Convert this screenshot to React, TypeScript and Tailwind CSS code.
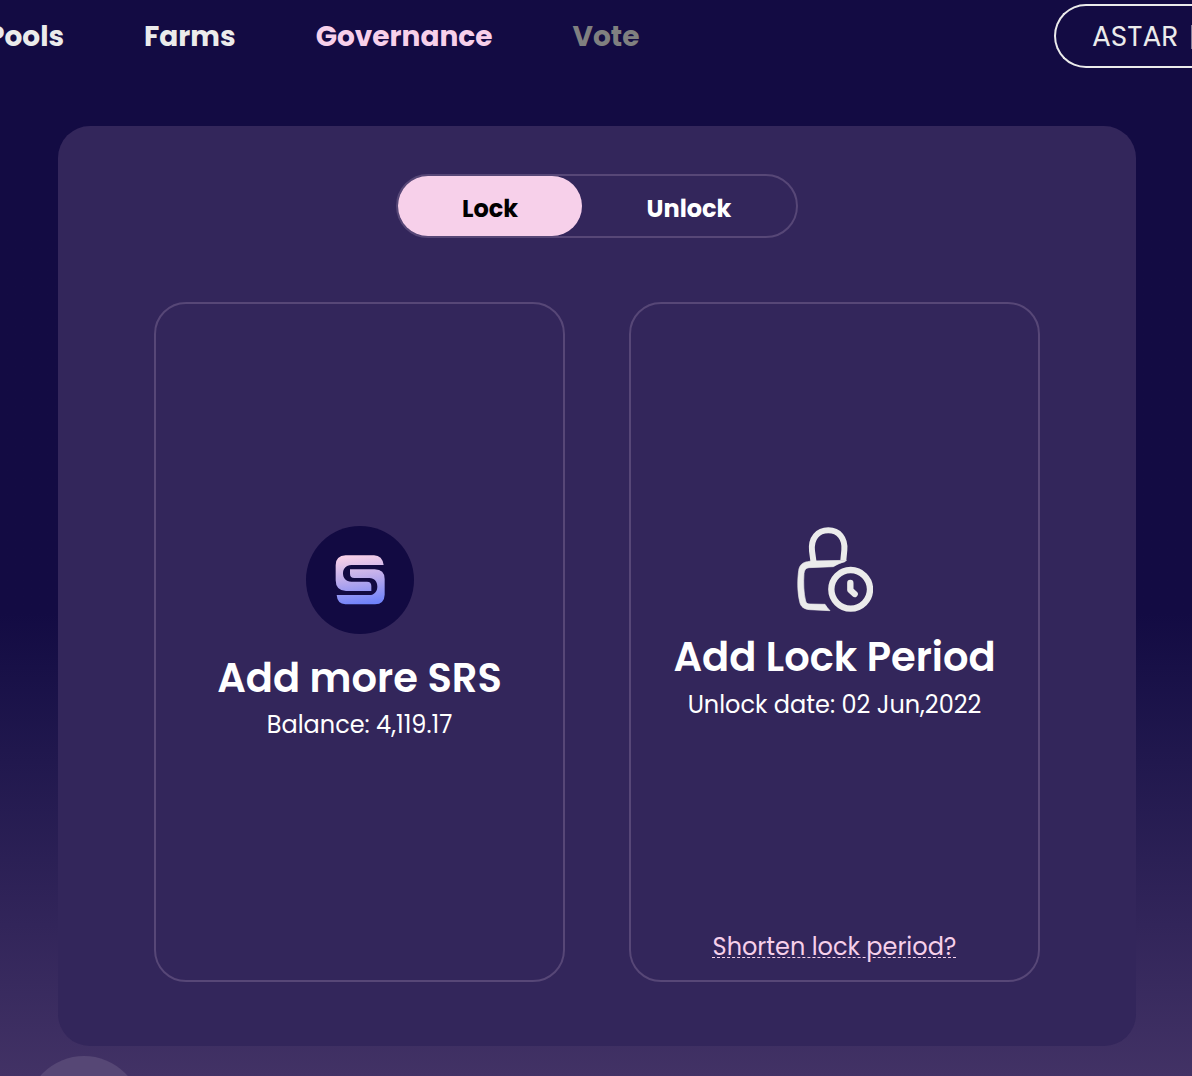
import { useState } from "react";

const navItems = [
  { label: "Pools", tone: "text-[#ebebeb]" },
  { label: "Farms", tone: "text-[#ebebeb]" },
  { label: "Governance", tone: "text-[#f7d0ea]" },
  { label: "Vote", tone: "text-[#808080]" },
];

function CoinIcon() {
  return (
    <svg viewBox="30 33 324 324" className="size-[108px]" aria-hidden="true">
      <defs>
        <linearGradient id="coin" gradientUnits="userSpaceOnUse" x1="180" y1="121" x2="200" y2="268">
          <stop offset="0" stopColor="#f8d0e8" />
          <stop offset="0.5" stopColor="#b8a9ec" />
          <stop offset="1" stopColor="#6f82fb" />
        </linearGradient>
      </defs>
      <circle cx="192" cy="195" r="162" fill="#120a42" />
      <path
        fill="url(#coin)"
        d="M149 121H234Q259 122 263 150H166C150 150 141 161 141 175C141 190 150 200 166 200H213Q226 200 226 213V228H150Q119 227 119 196V151Q119 122 149 121Z"
      />
      <path
        fill="url(#coin)"
        d="M162 163H236Q266 164 266 192V239Q265 267 237 268H148Q124 267 122 240H220C236 240 244 228 244 215C244 200 236 189 220 189H175Q162 189 162 176Z"
      />
    </svg>
  );
}

function LockClockIcon() {
  return (
    <svg viewBox="48 36 228 255" className="h-[85px] w-[76px]" fill="none" stroke="#ebebeb" aria-hidden="true">
      <path strokeWidth="18" d="M98 144L93 108C89 70 110 46 142 46C174 46 193 70 190 105L187 136" />
      <path
        fill="#ebebeb"
        stroke="#ebebeb"
        strokeWidth="2"
        d="M90 138L196 136L192 140C180 143 168 148 157 155L84 158C74 159 70 165 69 175C67 205 68 235 74 258C76 265 80 267 87 267L132 268C136 275 141 281 147 287L86 284C68 282 59 275 56 260C49 230 49 195 53 167C55 151 64 142 80 140Z"
      />
      <circle cx="209" cy="223" r="58" strokeWidth="19" />
      <path strokeWidth="19" strokeLinecap="round" strokeLinejoin="round" d="M208 204V225L221 237" />
    </svg>
  );
}

export default function App() {
  const [tab, setTab] = useState("Lock");
  return (
    <div className="relative min-h-screen overflow-hidden bg-linear-to-b from-[#130b43] from-57% via-[#32255a] via-86% to-[#423265] pb-[30px] font-['Poppins','Inter',sans-serif] text-white">
      <header className="flex items-start justify-between pt-1">
        <nav className="-ml-[13px] flex h-16 items-center gap-20 pt-0.5 text-[28px] font-bold">
          {navItems.map((item) => (
            <a key={item.label} href="#" className={item.tone}>
              {item.label}
            </a>
          ))}
        </nav>
        <button
          type="button"
          className="flex h-16 w-[138px] items-center justify-between rounded-l-full border-2 border-r-0 border-[#ebebeb] pt-0.5 pl-9 text-[28px] text-[#ebebeb]"
        >
          ASTAR
          <span className="h-6 w-px bg-[#817c9b]" />
        </button>
      </header>

      <main className="mx-14 mt-[58px] ml-[58px] rounded-[32px] bg-[#33265b] px-24 pt-12 pb-16">
        <div className="mx-auto flex h-16 w-[402px] rounded-full border-2 border-[#574777]">
          {["Lock", "Unlock"].map((name) => (
            <button
              key={name}
              type="button"
              aria-pressed={tab === name}
              onClick={() => setTab(name)}
              className={`rounded-full pt-1.5 text-center text-2xl font-bold ${
                tab === name ? "bg-[#f7d0ea] text-black" : "text-white"
              } ${name === "Lock" ? "w-[184px]" : "flex-1"}`}
            >
              {name}
            </button>
          ))}
        </div>

        <div className="mt-16 grid grid-cols-2 gap-16">
          <section className="flex h-[680px] flex-col items-center rounded-[32px] border-2 border-[#574777] pt-[222px]">
            <CoinIcon />
            <h2 className="mt-5 text-[40px] leading-12 font-semibold whitespace-nowrap">Add more SRS</h2>
            <p className="mt-[5px] text-2xl leading-9">Balance: 4,119.17</p>
          </section>

          <section className="flex h-[680px] flex-col items-center rounded-[32px] border-2 border-[#574777] pt-[223px] pb-[17px]">
            <LockClockIcon />
            <h2 className="mt-[21px] text-[40px] leading-12 font-semibold whitespace-nowrap">Add Lock Period</h2>
            <p className="mt-[6px] text-2xl leading-9">Unlock date: 02 Jun,2022</p>
            <a
              href="#"
              className="mt-auto text-2xl leading-8 text-[#f7d0ea] underline decoration-dashed decoration-1 underline-offset-2"
            >
              Shorten lock period?
            </a>
          </section>
        </div>
      </main>

      <button
        type="button"
        aria-label="Help"
        className="absolute -bottom-24 left-[26px] size-[116px] rounded-full bg-[#564775]"
      />
    </div>
  );
}
